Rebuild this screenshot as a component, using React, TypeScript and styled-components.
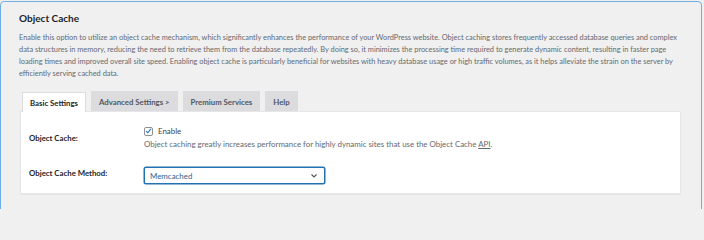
import React from "react";
import styled, { createGlobalStyle } from "styled-components";

const Global = createGlobalStyle`
  html, body { margin: 0; padding: 0; background: #f0f0f1; height: 209px; overflow: hidden; }
  body { font-family: "Lato", "Noto Sans", sans-serif; -webkit-font-smoothing: antialiased; }
  * { box-sizing: border-box; }
`;

const Card = styled.section`
  margin: 1px 2px 0 0;
  border: 1px solid #72aee6;
  border-radius: 4px;
  background: #f0f0f1;
  padding: 9px 22px 16px 18px;
  height: 230px;
`;

const Title = styled.h2`
  margin: 0 0 7px 0;
  font-size: 10px;
  line-height: 14px;
  font-weight: 700;
  color: #1d2327;
`;

const Description = styled.p`
  margin: 0 0 11px 0;
  font-size: 7.4px;
  line-height: 12px;
  color: #646970;
`;

const TabBar = styled.div`
  display: flex;
  gap: 5px;
  padding-left: 2px;
  align-items: flex-end;
  margin-left: 1px;
`;

const Tab = styled.div<{ $active?: boolean }>`
  height: 20px;
  padding: 0 7px;
  display: flex;
  align-items: center;
  font-size: 7.8px;
  font-weight: 700;
  color: ${(p) => (p.$active ? "#1d2327" : "#50575e")};
  background: ${(p) => (p.$active ? "#fff" : "#dcdcde")};
  border: 1px solid #dcdcde;
  border-bottom: none;
  margin-bottom: ${(p) => (p.$active ? "-1px" : "0")};
  position: relative;
  z-index: ${(p) => (p.$active ? 1 : 0)};
`;

const Panel = styled.div`
  margin-left: 1px;
  background: #fff;
  border: 1px solid #e6e6e8;
  box-shadow: 0 1px 1px rgba(0, 0, 0, 0.04);
  padding: 8px 8px 4px 8px;
  width: 661px;
`;

const Row = styled.div`
  display: grid;
  grid-template-columns: 115px 1fr;
  align-items: start;
  padding: 5px 0;
`;

const Label = styled.div<{ $top: number }>`
  font-size: 7.8px;
  font-weight: 700;
  color: #1d2327;
  padding-top: ${(p) => p.$top}px;
  line-height: 12px;
`;

const Field = styled.div`
  display: flex;
  flex-direction: column;
`;

const CheckLine = styled.label`
  display: flex;
  align-items: center;
  gap: 5px;
  font-size: 7.9px;
  color: #3c434a;
  line-height: 12px;
`;

const Box = styled.span`
  width: 9px;
  height: 9px;
  border: 1px solid #8c8f94;
  border-radius: 2px;
  background: #fff;
  display: inline-flex;
  align-items: center;
  justify-content: center;
`;

const Help = styled.div`
  margin-top: 1px;
  font-size: 7.9px;
  line-height: 12px;
  color: #646970;
  abbr { text-decoration: underline; text-decoration-thickness: 0.5px; text-underline-offset: 1px; }
`;

const Select = styled.div`
  margin-top: 7px;
  width: 181px;
  height: 17px;
  border: 1px solid #2271b1;
  box-shadow: 0 0 0 0.5px #2271b1;
  border-radius: 2px;
  background: #fff;
  display: flex;
  align-items: center;
  justify-content: space-between;
  padding: 0 6px 0 5px;
  font-size: 7.9px;
  color: #2c5f8f;
`;

export default function App() {
  return (
    <>
      <Global />
      <Card>
        <Title>Object Cache</Title>
        <Description>
          Enable this option to utilize an object cache mechanism, which significantly enhances the performance of your WordPress website. Object caching stores frequently accessed database queries and complex data structures in memory, reducing the need to retrieve them from the database repeatedly. By doing so, it minimizes the processing time required to generate dynamic content, resulting in faster page loading times and improved overall site speed. Enabling object cache is particularly beneficial for websites with heavy database usage or high traffic volumes, as it helps alleviate the strain on the server by efficiently serving cached data.
        </Description>
        <TabBar>
          <Tab $active>Basic Settings</Tab>
          <Tab>Advanced Settings &gt;</Tab>
          <Tab>Premium Services</Tab>
          <Tab>Help</Tab>
        </TabBar>
        <Panel>
          <Row>
            <Label $top={7}>Object Cache:</Label>
            <Field>
              <CheckLine>
                <Box>
                  <svg width="8" height="8" viewBox="0 0 8 8">
                    <path d="M1.4 4.2 L3.2 6 L6.7 1.6" fill="none" stroke="#2271b1" strokeWidth="1.3" />
                  </svg>
                </Box>
                Enable
              </CheckLine>
              <Help>
                Object caching greatly increases performance for highly dynamic sites that use the Object Cache <abbr>API</abbr>.
              </Help>
            </Field>
          </Row>
          <Row>
            <Label $top={7}>Object Cache Method:</Label>
            <Field>
              <Select>
                <span>Memcached</span>
                <svg width="8" height="6" viewBox="0 0 8 6">
                  <path d="M1.5 1.5 L4 4 L6.5 1.5" fill="none" stroke="#50575e" strokeWidth="1.1" />
                </svg>
              </Select>
            </Field>
          </Row>
        </Panel>
      </Card>
    </>
  );
}
